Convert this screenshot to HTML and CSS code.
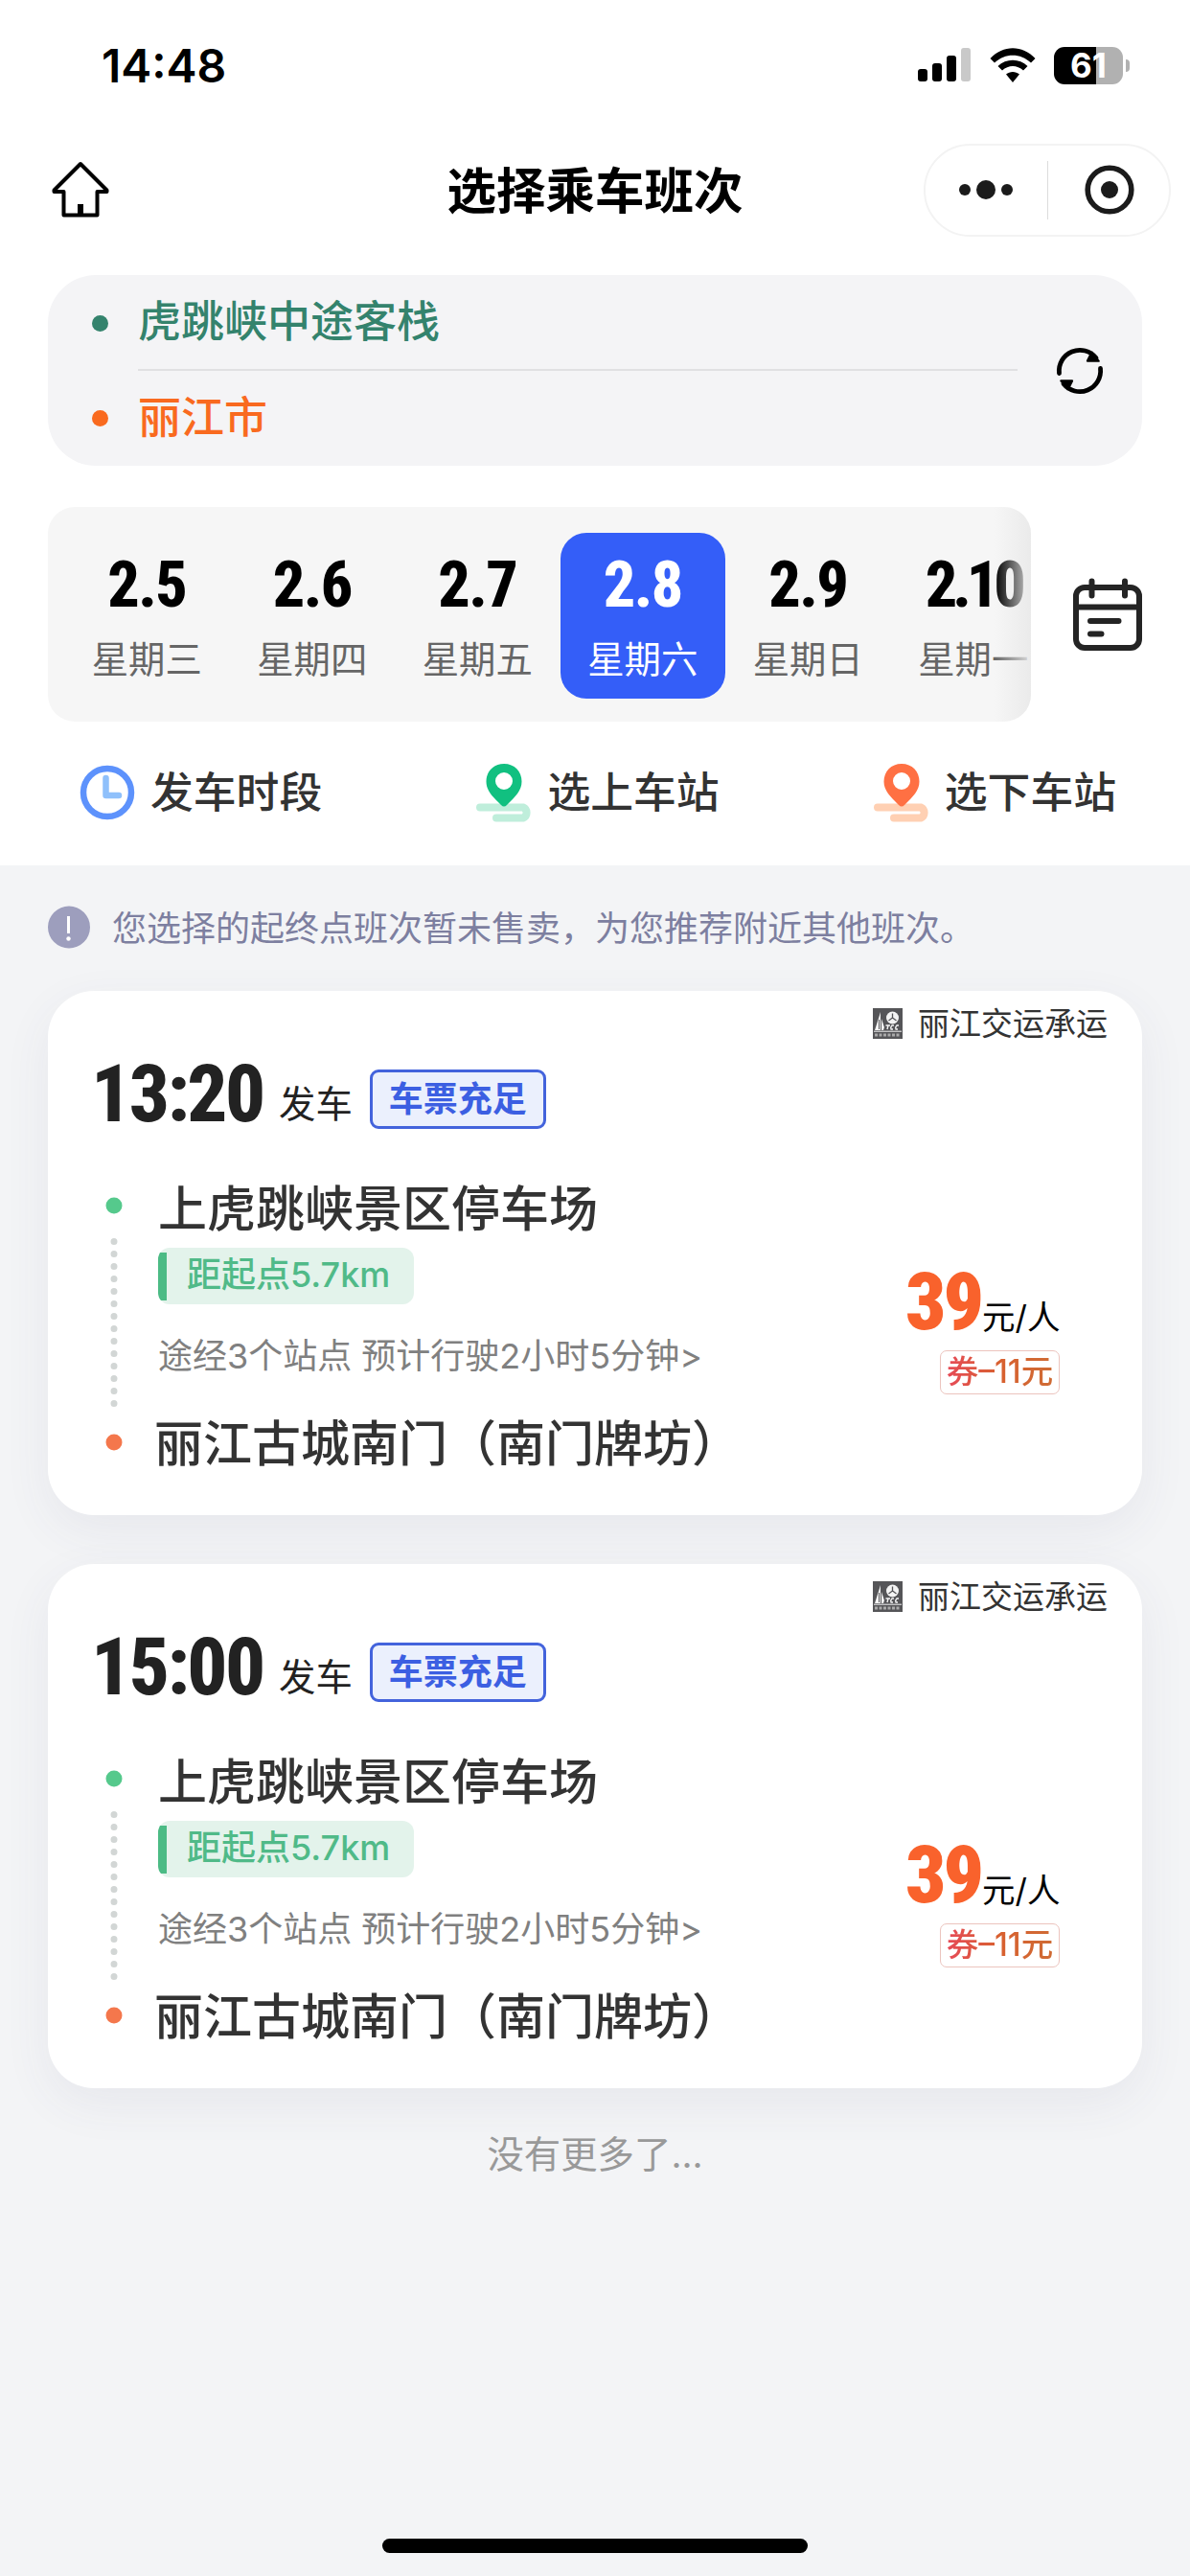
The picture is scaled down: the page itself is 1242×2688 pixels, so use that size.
FILE: index.html
```html
<!DOCTYPE html>
<html lang="zh-CN">
<head>
<meta charset="utf-8">
<title>选择乘车班次</title>
<link rel="stylesheet" href="styles.css">
</head>
<body>
<svg class="defs" width="0" height="0" aria-hidden="true">
  <symbol id="pin" viewBox="0 0 58 62">
    <path class="road" d="M4 46.500H49a6 6 0 0 1 0 11H21"/>
    <path class="drop" fill-rule="evenodd" d="M29 1C18 1 10.500 9 10.500 19.500C10.500 29 17 35 26 44q3 3 6 0C41 35 47.500 29 47.500 19.500C47.500 9 40 1 29 1ZM29 10a9 9 0 1 1 0 18a9 9 0 0 1 0-18Z"/>
  </symbol>
  <symbol id="carrier" viewBox="0 0 31 32">
    <rect width="31" height="32" fill="#555558"/>
    <path d="M2 23L8 4V23ZM9 23V11L12 20L11 23Z" fill="#f4f4f4"/>
    <path d="M6.500 12V22" stroke="#555558" stroke-width="1"/>
    <circle cx="20.500" cy="10" r="6.500" fill="#f4f4f4"/>
    <path d="M20.500 5.500V10L16.500 13M20.500 10L24.500 13" stroke="#555558" stroke-width="1.300" fill="none"/>
    <path d="M13.500 18H18M16 18L15 22M22 18H20q-2 2-1 4H21M27 18H25q-2 2-1 4H26" stroke="#f4f4f4" stroke-width="1.400" fill="none"/>
    <path d="M1 24.200H30" stroke="#f4f4f4" stroke-width="1"/>
    <path d="M2 28H29" stroke="#aaa" stroke-width="3" stroke-dasharray="3 1.500"/>
  </symbol>
</svg>

<div class="page">
  <header class="head">
    <div class="status">
      <span class="clock">14:48</span>
      <div class="indicators">
        <svg width="56" height="36" viewBox="0 0 56 36"><rect y="22" width="10" height="13" rx="3"/><rect x="15" y="16" width="10" height="19" rx="3"/><rect x="30" y="8" width="10" height="27" rx="3"/><rect x="45" y="0" width="10" height="35" rx="3" fill="#c9c9c9"/></svg>
        <svg class="wifi" width="48" height="37" viewBox="0 0 48 37"><path d="M0.500 11C14-3.500 34-3.500 47.500 11L43 15.500C32 5 16 5 5 15.500Z"/><path d="M8.500 19C17 10.500 31 10.500 39.500 19L35 23.500C28.500 17.500 19.500 17.500 13 23.500Z"/><path d="M17 27.500C21 24 27 24 31 27.500L24 36Z"/></svg>
        <div class="battery"><span class="level">61</span><i class="nub"></i></div>
      </div>
    </div>
    <div class="nav">
      <svg class="home" width="60" height="60" viewBox="0 0 60 60" fill="none" stroke="#000" stroke-width="4" stroke-linejoin="round"><path d="M30 3L57.500 30.500V32H47.500V56.500H12.500V32H2.500V30.500Z"/><path d="M30 45V56" stroke-width="6"/></svg>
      <h1 class="title">选择乘车班次</h1>
      <div class="capsule">
        <svg class="more" width="60" height="24" viewBox="0 0 60 24"><circle cx="8" cy="12" r="6"/><circle cx="30" cy="12" r="10"/><circle cx="52" cy="12" r="6"/></svg>
        <i class="split"></i>
        <svg class="target" width="52" height="52" viewBox="0 0 52 52"><circle cx="26" cy="26" r="22.800" fill="none" stroke="#1b1b1b" stroke-width="5.600"/><circle cx="26" cy="26" r="9"/></svg>
      </div>
    </div>

    <section class="route">
      <div class="ends">
        <div class="end from"><i class="dot"></i><span>虎跳峡中途客栈</span></div>
        <div class="end to"><i class="dot"></i><span>丽江市</span></div>
      </div>
      <svg class="swap" width="52" height="52" viewBox="0 0 52 52"><g fill="none" stroke="#000" stroke-width="4.800" stroke-linecap="round"><path d="M4.500 28.500A21.700 21.700 0 0 1 43 12.500"/><path d="M47.500 23.500A21.700 21.700 0 0 1 9 39.500"/></g><path d="M39 5.500L46.500 15q1 1.800-1 1.800H34q-1.800 0-1-1.800L37 7ZM13 46.500L5.500 37q-1-1.800 1-1.800H18q1.800 0 1 1.800L15 45Z"/></svg>
    </section>

    <section class="calendar">
      <div class="strip">
        <div class="day"><b>2.5</b><span>星期三</span></div>
        <div class="day"><b>2.6</b><span>星期四</span></div>
        <div class="day"><b>2.7</b><span>星期五</span></div>
        <div class="day active"><b>2.8</b><span>星期六</span></div>
        <div class="day"><b>2.9</b><span>星期日</span></div>
        <div class="day"><b class="long">2.10</b><span>星期一</span></div>
      </div>
      <svg width="72" height="76" viewBox="0 0 72 76" fill="none" stroke="#242424" stroke-width="6" stroke-linecap="round"><rect x="3" y="10" width="66" height="63" rx="9"/><path d="M3 30.500H69" stroke-linecap="butt"/><path d="M19.500 3.500V18.500M54 3.500V18.500M18 45H47.500M18 58.500H29.500"/></svg>
    </section>

    <nav class="filters">
      <div class="filter"><svg width="58" height="58" viewBox="0 0 58 58" fill="none"><circle cx="29" cy="29" r="25" stroke="#5d92fc" stroke-width="6.500"/><path d="M27.500 14V32H41" stroke="#8fc0fb" stroke-width="6.500" stroke-linecap="round" stroke-linejoin="round"/></svg><span>发车时段</span></div>
      <div class="filter up"><svg width="58" height="62"><use href="#pin"/></svg><span>选上车站</span></div>
      <div class="filter down"><svg width="58" height="62"><use href="#pin"/></svg><span>选下车站</span></div>
    </nav>
  </header>

  <main class="list">
    <p class="notice"><svg width="44" height="45" viewBox="0 0 44 45"><circle cx="22" cy="22.500" r="22" fill="#9d9ebd"/><path d="M21.500 11V29" stroke="#fff" stroke-width="3"/><circle cx="21.500" cy="34.500" r="2.200" fill="#fff"/></svg><span>您选择的起终点班次暂未售卖，为您推荐附近其他班次。</span></p>

    <article class="card">
      <div class="carrier"><svg width="31" height="32"><use href="#carrier"/></svg><span>丽江交运承运</span></div>
      <div class="depart"><b class="time">13:20</b><span class="word">发车</span><span class="stock">车票充足</span></div>
      <div class="trip">
        <svg class="rail" width="18" height="265" viewBox="0 0 18 265"><circle cx="9" cy="9" r="8.500" fill="#55c98c"/><path d="M9 46.500V217" stroke="#d2d6d5" stroke-width="7" stroke-linecap="round" stroke-dasharray="0 13"/><circle cx="9" cy="256" r="8.500" fill="#f4774c"/></svg>
        <div class="stops">
          <div class="stop">上虎跳峡景区停车场</div>
          <div class="near">距起点5.7km</div>
          <div class="via">途经3个站点 预计行驶2小时5分钟&gt;</div>
          <div class="stop last">丽江古城南门（南门牌坊）</div>
        </div>
        <div class="fare">
          <div class="price"><b>39</b><span>元/人</span></div>
          <div class="coupon"><span>券–11元</span></div>
        </div>
      </div>
    </article>

    <article class="card">
      <div class="carrier"><svg width="31" height="32"><use href="#carrier"/></svg><span>丽江交运承运</span></div>
      <div class="depart"><b class="time">15:00</b><span class="word">发车</span><span class="stock">车票充足</span></div>
      <div class="trip">
        <svg class="rail" width="18" height="265" viewBox="0 0 18 265"><circle cx="9" cy="9" r="8.500" fill="#55c98c"/><path d="M9 46.500V217" stroke="#d2d6d5" stroke-width="7" stroke-linecap="round" stroke-dasharray="0 13"/><circle cx="9" cy="256" r="8.500" fill="#f4774c"/></svg>
        <div class="stops">
          <div class="stop">上虎跳峡景区停车场</div>
          <div class="near">距起点5.7km</div>
          <div class="via">途经3个站点 预计行驶2小时5分钟&gt;</div>
          <div class="stop last">丽江古城南门（南门牌坊）</div>
        </div>
        <div class="fare">
          <div class="price"><b>39</b><span>元/人</span></div>
          <div class="coupon"><span>券–11元</span></div>
        </div>
      </div>
    </article>

    <p class="end-note">没有更多了...</p>
  </main>
  <div class="home-bar"></div>
</div>
</body>
</html>
```
FILE: styles.css
```css
* { box-sizing: border-box; }
body, h1, p { margin: 0; }
body {
  width: 1242px;
  background: #f3f4f6;
  font-family: Inter, "Noto Sans CJK SC", sans-serif;
  color: #333;
}
svg { display: block; flex: none; }
i { display: block; flex: none; }
span, b { white-space: nowrap; }
.defs { position: absolute; }
.page { height: 2688px; display: flex; flex-direction: column; overflow: hidden; }

.head { height: 903px; background: #fff; flex: none; }
.status { height: 136px; padding: 0 63px 0 106px; display: flex; align-items: center; justify-content: space-between; }
.clock { font-size: 48px; font-weight: 600; color: #000; }
.indicators { display: flex; align-items: center; }
.wifi { margin-left: 19px; }
.battery { display: flex; align-items: center; margin-left: 19px; }
.level {
  width: 72px; height: 39px; border-radius: 11px;
  background: linear-gradient(90deg, #000 44px, #b1b1b1 44px);
  color: #fff; font-size: 35px; font-weight: 700; line-height: 39px; text-align: center;
}
.nub { width: 4px; height: 13px; margin-left: 3px; border-radius: 0 5px 5px 0; background: #b1b1b1; }

.nav { height: 124px; display: grid; grid-template-columns: 1fr auto 1fr; align-items: center; }
.home { margin-left: 54px; }
.title { font-size: 51.500px; font-weight: 700; color: #000; line-height: 76px; padding-top: 1px; }
.capsule {
  justify-self: end; width: 258px; height: 97px; margin: 0 20px 0 0;
  border: 2px solid #f3f3f3; border-radius: 49px;
  display: flex; align-items: center; fill: #1b1b1b;
}
.more { margin-left: 33px; }
.split { width: 1px; height: 61px; background: #dcdcdc; margin-left: 34px; }
.target { margin-left: 38px; }

.route { margin: 27px 50px 0; height: 199px; border-radius: 50px; background: #f4f4f6; display: flex; align-items: center; }
.ends { flex: 1; height: 100%; display: grid; grid-template-rows: 100px 99px; margin-left: 46px; }
.end { display: flex; align-items: center; font-size: 45px; font-weight: 500; }
.end span { flex: 1; margin-left: 31px; height: 100%; line-height: 98px; }
.dot { width: 17px; height: 17px; border-radius: 50%; background: currentColor; }
.from { color: #34836d; }
.from span { border-bottom: 2px solid #e0e0e2; }
.to { color: #f96a1f; }
.swap { margin: 0 39px; }

.calendar { margin: 43px 50px 0; display: flex; align-items: center; justify-content: space-between; }
.strip {
  position: relative; width: 1026px; height: 224px; padding: 27px 0 0 17px; border-radius: 28px;
  background: #f6f6f6; display: flex; overflow: hidden;
}
.strip::after {
  content: ""; position: absolute; top: 0; right: 0; bottom: 0; width: 38px;
  background: linear-gradient(90deg, rgba(233,233,233,0), rgba(233,233,233,.9));
}
.day { flex: none; width: 172.500px; height: 173px; border-radius: 27px; display: flex; flex-direction: column; align-items: center; }
.day b { font: 800 66px/74px Roboto, sans-serif; font-stretch: 75%; letter-spacing: -1.500px; color: #000; margin-top: 18px; }
.day .long { letter-spacing: -5px; }
.day span { font-size: 38.400px; line-height: 56px; color: #666; margin-top: 12px; }
.active { background: #345ef8; }
.active b, .active span { color: #fff; }

.filters { display: flex; justify-content: space-between; padding: 43px 77px 0 83px; }
.filter { display: flex; align-items: center; height: 62px; gap: 16px; font-size: 44.800px; font-weight: 500; line-height: 62px; }
.road { fill: none; stroke: var(--soft); stroke-width: 8; stroke-linecap: round; }
.drop { fill: var(--main); }
.up { --main: #11c080; --soft: #bfeedb; }
.down { --main: #ff7043; --soft: #ffd0b3; }

.list { flex: 1; padding: 0 50px; }
.notice { height: 131px; padding-bottom: 3px; display: flex; align-items: center; gap: 23px; font-size: 36px; color: #7d7fa0; }
.notice span { margin-top: -3px; }
.card {
  height: 547px; margin-bottom: 51px; padding: 10px 0 0 47px; border-radius: 48px; background: #fff;
  box-shadow: 0 16px 50px rgba(70,70,110,.07);
}
.carrier { height: 48px; margin-right: 36px; display: flex; align-items: center; justify-content: flex-end; gap: 16px; font-size: 33px; line-height: 44px; color: #333; }
.depart { height: 90px; display: flex; align-items: center; margin-top: 10px; color: #222; }
.time { font: 800 83px/90px Roboto, sans-serif; font-stretch: 75%; letter-spacing: -2.500px; width: 182px; margin: -10px 0 0 -2px; }
.word { font-size: 38.400px; margin: 9px 0 0 14px; line-height: 56px; }
.stock {
  margin: 0 0 0 18px; width: 184px; height: 62px; border: 3px solid #4363dc; border-radius: 9px;
  background: #ebf0fd; color: #3c5fe2; font-size: 36px; font-weight: 700; line-height: 56px; text-align: center;
}
.trip { display: flex; margin-top: 32px; }
.rail { margin: 25px 0 0 13px; }
.stops { flex: 1; margin-left: 37px; }
.stop { font-size: 51px; font-weight: 500; line-height: 76px; }
.near {
  width: 267px; height: 59px; margin-top: 2px; border-radius: 12px; padding-left: 30px;
  background: linear-gradient(#4cbb85 0 0) 0 5px / 9px 50px no-repeat, #e3f3eb;
  color: #50ba88; font-size: 36px; font-weight: 500; line-height: 57px;
}
.via { font-size: 36px; line-height: 54px; margin-top: 27px; color: #808080; }
.last { margin: 27px 0 0 -4px; }
.fare { width: 247px; padding-top: 90px; }
.price { display: flex; align-items: baseline; height: 95px; color: #000; }
.price b { font: 900 83px/90px Roboto, sans-serif; font-stretch: 75%; letter-spacing: -3px; color: #f9622c; width: 80px; }
.price span { font-size: 34.500px; }
.coupon { margin: 0 0 0 36px; width: 125px; height: 46px; border: 1px solid #ecc4be; border-radius: 7px; text-align: center; font-size: 33.500px; font-weight: 500; line-height: 42px; }
.coupon span { color: transparent; background: linear-gradient(90deg, #e64a57, #d8602f 50%, #cf6c35); background-clip: text; }
.end-note { text-align: center; font-size: 38.400px; line-height: 56px; color: #999; margin-top: -10px; }
.home-bar { width: 444px; height: 15px; border-radius: 8px; background: #000; margin: 0 auto 24px; }
```
